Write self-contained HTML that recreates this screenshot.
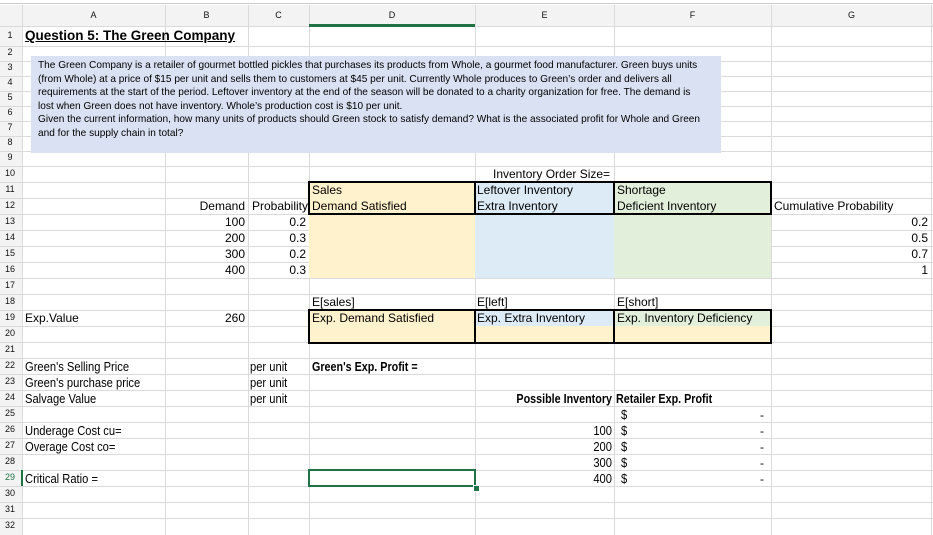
<!DOCTYPE html>
<html><head><meta charset="utf-8"><style>
body{margin:0;width:933px;height:532px;overflow:hidden;background:#fff;font-family:"Liberation Sans",Arial,sans-serif;position:relative}
.h{position:absolute;left:0;width:933px;height:1px;background:#dadada}
.v{position:absolute;top:5px;height:530px;width:1px;background:#dadada}
.t{position:absolute;font-size:12px;line-height:16px;white-space:nowrap;color:#000}
.r{text-align:right}
.rn{position:absolute;left:0;width:20px;text-align:center;font-size:9px;color:#111}
.ch{position:absolute;top:5px;height:21px;line-height:21px;text-align:center;font-size:9px;color:#111}
.n{transform:scaleX(.86);transform-origin:left center}
.nr{transform:scaleX(.86);transform-origin:right center}
.box{position:absolute;border:2px solid #000;box-sizing:border-box}
</style></head><body>
<div style="position:absolute;left:0;top:0;width:933px;height:3px;background:#fff;border-bottom:1px solid #ccc"></div>
<div style="position:absolute;left:0;top:5px;width:933px;height:21px;background:#f3f3f3"></div>
<div style="position:absolute;left:0;top:5px;width:22px;height:530px;background:#f3f3f3"></div>
<div class="h" style="top:26px"></div><div class="h" style="top:46px"></div><div class="h" style="top:61px"></div><div class="h" style="top:76px"></div><div class="h" style="top:91px"></div><div class="h" style="top:106px"></div><div class="h" style="top:121px"></div><div class="h" style="top:136px"></div><div class="h" style="top:151px"></div><div class="h" style="top:166px"></div><div class="h" style="top:182px"></div><div class="h" style="top:198px"></div><div class="h" style="top:214px"></div><div class="h" style="top:230px"></div><div class="h" style="top:246px"></div><div class="h" style="top:262px"></div><div class="h" style="top:278px"></div><div class="h" style="top:294px"></div><div class="h" style="top:310px"></div><div class="h" style="top:326px"></div><div class="h" style="top:342px"></div><div class="h" style="top:358px"></div><div class="h" style="top:374px"></div><div class="h" style="top:390px"></div><div class="h" style="top:406px"></div><div class="h" style="top:422px"></div><div class="h" style="top:438px"></div><div class="h" style="top:454px"></div><div class="h" style="top:470px"></div><div class="h" style="top:486px"></div><div class="h" style="top:502px"></div><div class="h" style="top:518px"></div>
<div class="v" style="left:22px"></div><div class="v" style="left:165px"></div><div class="v" style="left:248px"></div><div class="v" style="left:309px"></div><div class="v" style="left:475px"></div><div class="v" style="left:614px"></div><div class="v" style="left:771px"></div><div class="v" style="left:931px"></div>
<div style="position:absolute;left:309px;top:182px;width:166px;height:96px;background:#fff2cc"></div>
<div style="position:absolute;left:475px;top:182px;width:139px;height:96px;background:#ddebf7"></div>
<div style="position:absolute;left:614px;top:182px;width:157px;height:96px;background:#e2efda"></div>
<div style="position:absolute;left:309px;top:310px;width:462px;height:32px;background:#fff2cc"></div>
<div style="position:absolute;left:475px;top:310px;width:139px;height:16px;background:#ddebf7"></div>
<div style="position:absolute;left:614px;top:310px;width:157px;height:16px;background:#e2efda"></div>
<div style="position:absolute;left:309px;top:24px;width:166px;height:3px;background:#217346"></div>
<div class="ch" style="left:22px;width:143px">A</div><div class="ch" style="left:165px;width:83px">B</div><div class="ch" style="left:248px;width:61px">C</div><div class="ch" style="left:309px;width:166px">D</div><div class="ch" style="left:475px;width:139px">E</div><div class="ch" style="left:614px;width:157px">F</div><div class="ch" style="left:771px;width:161px">G</div>
<div class="rn" style="top:30px">1</div><div class="rn" style="top:47px">2</div><div class="rn" style="top:62px">3</div><div class="rn" style="top:77px">4</div><div class="rn" style="top:92px">5</div><div class="rn" style="top:107px">6</div><div class="rn" style="top:122px">7</div><div class="rn" style="top:137px">8</div><div class="rn" style="top:152px">9</div>
<div class="rn" style="top:168px">10</div><div class="rn" style="top:184px">11</div><div class="rn" style="top:200px">12</div><div class="rn" style="top:216px">13</div><div class="rn" style="top:232px">14</div><div class="rn" style="top:248px">15</div><div class="rn" style="top:264px">16</div><div class="rn" style="top:280px">17</div><div class="rn" style="top:296px">18</div><div class="rn" style="top:312px">19</div><div class="rn" style="top:328px">20</div><div class="rn" style="top:344px">21</div><div class="rn" style="top:360px">22</div><div class="rn" style="top:376px">23</div><div class="rn" style="top:392px">24</div><div class="rn" style="top:408px">25</div><div class="rn" style="top:424px">26</div><div class="rn" style="top:440px">27</div><div class="rn" style="top:456px">28</div><div class="rn" style="top:472px;color:#217346">29</div><div class="rn" style="top:488px">30</div><div class="rn" style="top:504px">31</div><div class="rn" style="top:520px">32</div>
<div style="position:absolute;left:21px;top:470px;width:2px;height:16px;background:#217346"></div>
<div class="t" style="left:25px;top:28px;font-size:13.5px;font-weight:bold;text-decoration:underline">Question 5: The Green Company</div>
<div style="position:absolute;left:31px;top:56px;width:690px;height:97px;background:#d9e1f2;box-sizing:border-box;padding:3px 0 0 7px;font-size:10.1px;line-height:13.6px;color:#000;white-space:nowrap;overflow:hidden">
The Green Company is a retailer of gourmet bottled pickles that purchases its products from Whole, a gourmet food manufacturer. Green buys units<br>(from Whole) at a price of $15 per unit and sells them to customers at $45 per unit. Currently Whole produces to Green’s order and delivers all<br>requirements at the start of the period. Leftover inventory at the end of the season will be donated to a charity organization for free. The demand is<br>lost when Green does not have inventory. Whole’s production cost is $10 per unit.<br>Given the current information, how many units of products should Green stock to satisfy demand? What is the associated profit for Whole and Green<br>and for the supply chain in total?</div>
<div class="t" style="left:493px;top:166px">Inventory Order Size=</div>
<div class="t" style="left:312px;top:182px">Sales</div>
<div class="t" style="left:477px;top:182px">Leftover Inventory</div>
<div class="t" style="left:617px;top:182px">Shortage</div>
<div class="t r" style="left:165px;width:80px;top:198px">Demand</div>
<div class="t r" style="left:240px;width:68px;top:198px">Probability</div>
<div class="t" style="left:312px;top:198px">Demand Satisfied</div>
<div class="t" style="left:477px;top:198px">Extra Inventory</div>
<div class="t" style="left:617px;top:198px">Deficient Inventory</div>
<div class="t" style="left:774px;top:198px">Cumulative Probability</div>
<div class="t r" style="left:165px;width:80px;top:214px">100</div><div class="t r" style="left:248px;width:58px;top:214px">0.2</div><div class="t r" style="left:771px;width:157px;top:214px">0.2</div>
<div class="t r" style="left:165px;width:80px;top:230px">200</div><div class="t r" style="left:248px;width:58px;top:230px">0.3</div><div class="t r" style="left:771px;width:157px;top:230px">0.5</div>
<div class="t r" style="left:165px;width:80px;top:246px">300</div><div class="t r" style="left:248px;width:58px;top:246px">0.2</div><div class="t r" style="left:771px;width:157px;top:246px">0.7</div>
<div class="t r" style="left:165px;width:80px;top:262px">400</div><div class="t r" style="left:248px;width:58px;top:262px">0.3</div><div class="t r" style="left:771px;width:157px;top:262px">1</div>
<div class="box" style="left:308px;top:181px;width:168px;height:34px"></div>
<div class="box" style="left:474px;top:181px;width:141px;height:34px"></div>
<div class="box" style="left:613px;top:181px;width:159px;height:34px"></div>
<div class="t" style="left:312px;top:294px">E[sales]</div><div class="t" style="left:477px;top:294px">E[left]</div><div class="t" style="left:617px;top:294px">E[short]</div>
<div class="t" style="left:25px;top:310px">Exp.Value</div>
<div class="t r" style="left:165px;width:80px;top:310px">260</div>
<div class="t" style="left:312px;top:310px">Exp. Demand Satisfied</div>
<div class="t" style="left:477px;top:310px">Exp. Extra Inventory</div>
<div class="t" style="left:617px;top:310px">Exp. Inventory Deficiency</div>
<div class="box" style="left:308px;top:309px;width:168px;height:35px"></div>
<div class="box" style="left:474px;top:309px;width:141px;height:35px"></div>
<div class="box" style="left:613px;top:309px;width:159px;height:35px"></div>
<div class="t n" style="left:25px;top:359px;font-size:13px">Green's Selling Price</div>
<div class="t n" style="left:25px;top:375px;font-size:13px">Green's purchase price</div>
<div class="t n" style="left:25px;top:391px;font-size:13px">Salvage Value</div>
<div class="t n" style="left:25px;top:423px;font-size:13px">Underage Cost cu=</div>
<div class="t n" style="left:25px;top:439px;font-size:13px">Overage Cost co=</div>
<div class="t n" style="left:25px;top:471px;font-size:13px">Critical Ratio =</div>
<div class="t n" style="left:250px;top:359px;font-size:13px">per unit</div>
<div class="t n" style="left:250px;top:375px;font-size:13px">per unit</div>
<div class="t n" style="left:250px;top:391px;font-size:13px">per unit</div>
<div class="t n" style="left:312px;top:359px;font-size:12.5px;font-weight:bold">Green's Exp. Profit =</div>
<div class="t r nr" style="left:420px;width:192px;top:391px;font-size:12.5px;font-weight:bold">Possible Inventory</div>
<div class="t n" style="left:616px;top:391px;font-size:12.5px;font-weight:bold">Retailer Exp. Profit</div>
<div class="t n" style="left:621px;top:407px;font-size:13px">$</div><div class="t" style="left:760px;top:407px">-</div>
<div class="t r nr" style="left:520px;width:92px;top:423px;font-size:13px">100</div><div class="t n" style="left:621px;top:423px;font-size:13px">$</div><div class="t" style="left:760px;top:423px">-</div>
<div class="t r nr" style="left:520px;width:92px;top:439px;font-size:13px">200</div><div class="t n" style="left:621px;top:439px;font-size:13px">$</div><div class="t" style="left:760px;top:439px">-</div>
<div class="t r nr" style="left:520px;width:92px;top:455px;font-size:13px">300</div><div class="t n" style="left:621px;top:455px;font-size:13px">$</div><div class="t" style="left:760px;top:455px">-</div>
<div class="t r nr" style="left:520px;width:92px;top:471px;font-size:13px">400</div><div class="t n" style="left:621px;top:471px;font-size:13px">$</div><div class="t" style="left:760px;top:471px">-</div>
<div style="position:absolute;left:308px;top:469px;width:168px;height:18px;border:2px solid #217346;box-sizing:border-box"></div>
<div style="position:absolute;left:473px;top:485px;width:5px;height:5px;background:#217346;border:1px solid #fff"></div>
</body></html>
